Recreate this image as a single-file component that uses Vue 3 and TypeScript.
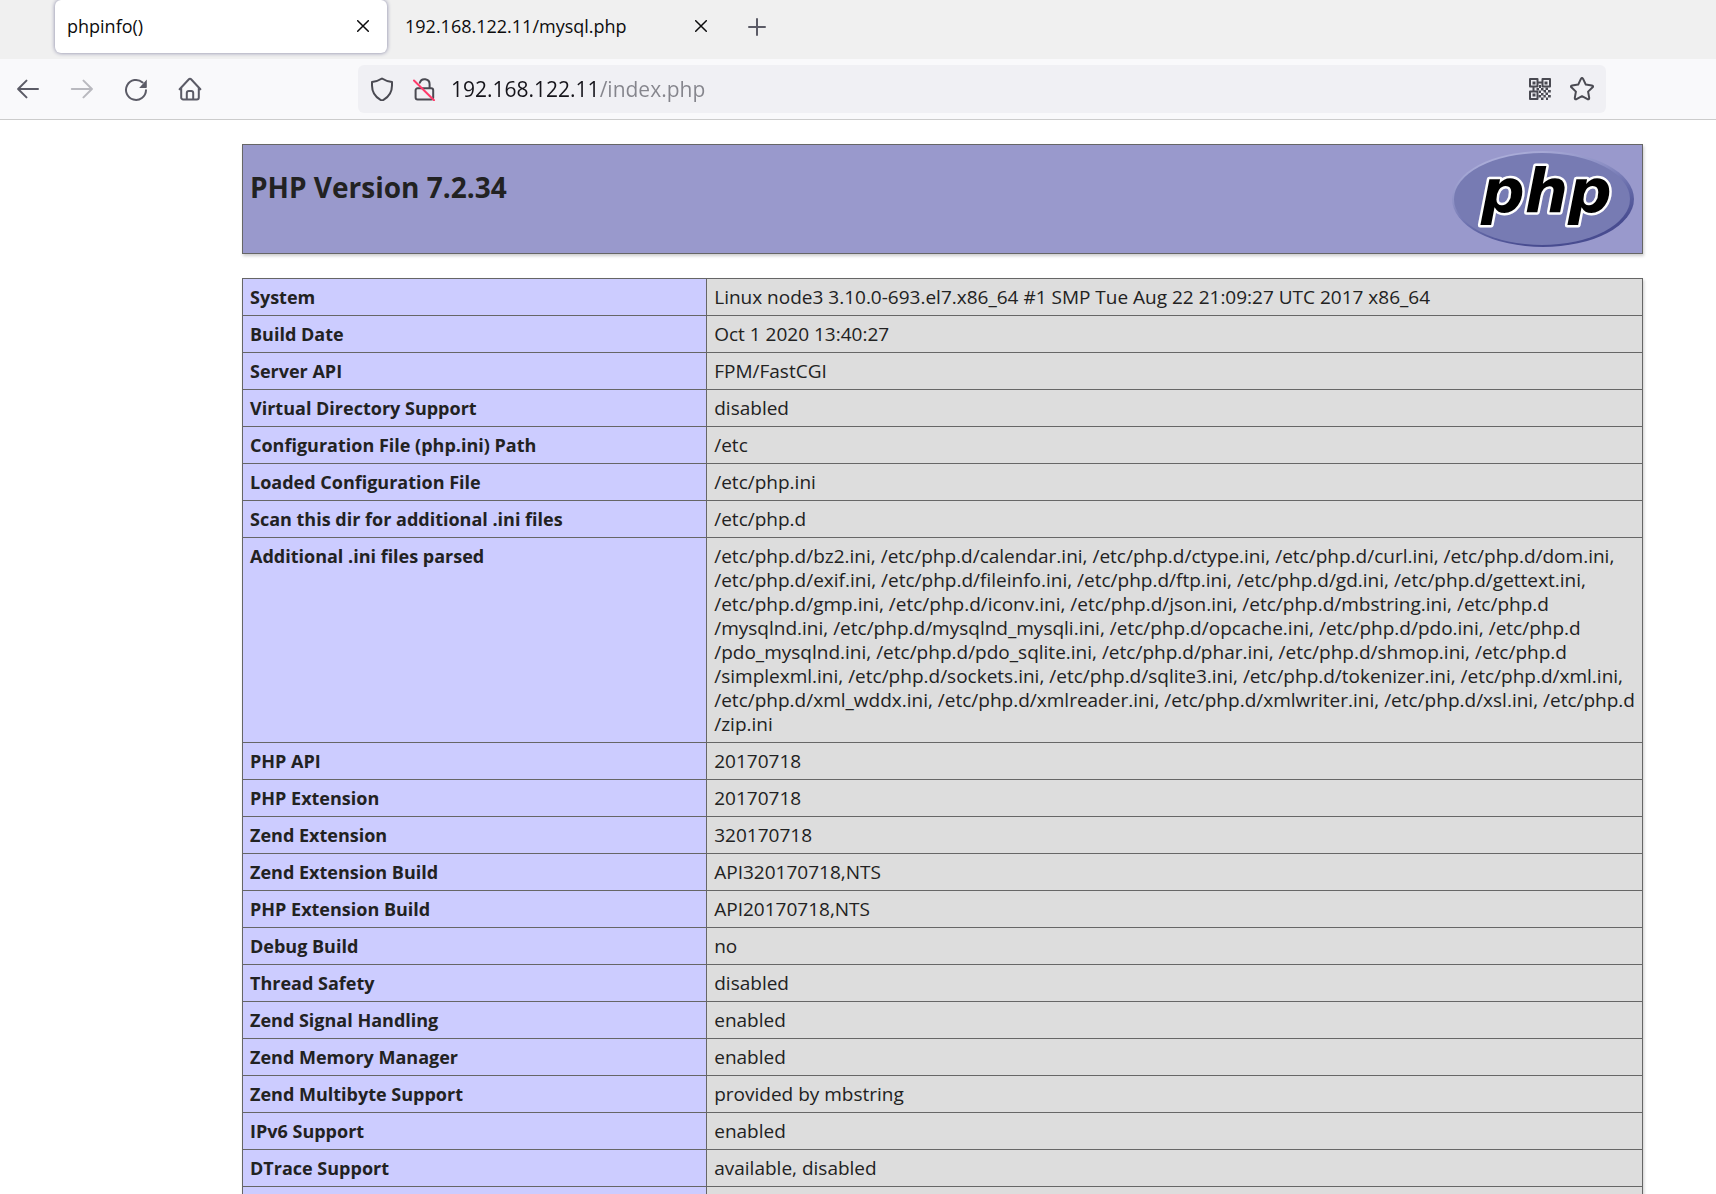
<script setup lang="ts">
import { ref } from 'vue'

interface Tab {
  title: string
}

interface InfoRow {
  label: string
  value: string
}

const tabs: Tab[] = [{ title: 'phpinfo()' }, { title: '192.168.122.11/mysql.php' }]
const activeTab = ref(0)
const address = ref('192.168.122.11/index.php')

const iniFiles = [
  '/etc/php.d/bz2.ini, /etc/php.d/calendar.ini, /etc/php.d/ctype.ini, /etc/php.d/curl.ini, /etc/php.d/dom.ini,',
  '/etc/php.d/exif.ini, /etc/php.d/fileinfo.ini, /etc/php.d/ftp.ini, /etc/php.d/gd.ini, /etc/php.d/gettext.ini,',
  '/etc/php.d/gmp.ini, /etc/php.d/iconv.ini, /etc/php.d/json.ini, /etc/php.d/mbstring.ini, /etc/php.d',
  '/mysqlnd.ini, /etc/php.d/mysqlnd_mysqli.ini, /etc/php.d/opcache.ini, /etc/php.d/pdo.ini, /etc/php.d',
  '/pdo_mysqlnd.ini, /etc/php.d/pdo_sqlite.ini, /etc/php.d/phar.ini, /etc/php.d/shmop.ini, /etc/php.d',
  '/simplexml.ini, /etc/php.d/sockets.ini, /etc/php.d/sqlite3.ini, /etc/php.d/tokenizer.ini, /etc/php.d/xml.ini,',
  '/etc/php.d/xml_wddx.ini, /etc/php.d/xmlreader.ini, /etc/php.d/xmlwriter.ini, /etc/php.d/xsl.ini, /etc/php.d',
  '/zip.ini',
].join('\n')

const rows: InfoRow[] = [
  { label: 'System', value: 'Linux node3 3.10.0-693.el7.x86_64 #1 SMP Tue Aug 22 21:09:27 UTC 2017 x86_64' },
  { label: 'Build Date', value: 'Oct 1 2020 13:40:27' },
  { label: 'Server API', value: 'FPM/FastCGI' },
  { label: 'Virtual Directory Support', value: 'disabled' },
  { label: 'Configuration File (php.ini) Path', value: '/etc' },
  { label: 'Loaded Configuration File', value: '/etc/php.ini' },
  { label: 'Scan this dir for additional .ini files', value: '/etc/php.d' },
  { label: 'Additional .ini files parsed', value: iniFiles },
  { label: 'PHP API', value: '20170718' },
  { label: 'PHP Extension', value: '20170718' },
  { label: 'Zend Extension', value: '320170718' },
  { label: 'Zend Extension Build', value: 'API320170718,NTS' },
  { label: 'PHP Extension Build', value: 'API20170718,NTS' },
  { label: 'Debug Build', value: 'no' },
  { label: 'Thread Safety', value: 'disabled' },
  { label: 'Zend Signal Handling', value: 'enabled' },
  { label: 'Zend Memory Manager', value: 'enabled' },
  { label: 'Zend Multibyte Support', value: 'provided by mbstring' },
  { label: 'IPv6 Support', value: 'enabled' },
  { label: 'DTrace Support', value: 'available, disabled' },
  { label: '', value: '' },
]
</script>

<template>
  <div class="browser">
    <header class="tab-strip">
      <div v-for="(tab, i) in tabs" :key="tab.title" class="tab" :class="{ active: i === activeTab }">
        <button class="tab-title" type="button" @click="activeTab = i">{{ tab.title }}</button>
        <button class="tab-close" type="button" aria-label="Close tab">
          <svg width="12" height="12" viewBox="0 0 12 12"><path d="M.7.7l10.6 10.6M11.3.7L.7 11.3" /></svg>
        </button>
      </div>
      <button class="new-tab" type="button" aria-label="New tab">
        <svg width="18" height="18" viewBox="0 0 18 18"><path d="M9 1v16M1 9h16" /></svg>
      </button>
    </header>

    <nav class="toolbar">
      <div class="nav-buttons">
        <button class="tool" type="button" aria-label="Back">
          <svg width="24" height="24" viewBox="0 0 24 24"><path d="M22 12H2.500M10.500 3.600L2.100 12l8.400 8.400" /></svg>
        </button>
        <button class="tool" type="button" aria-label="Forward" disabled>
          <svg width="24" height="24" viewBox="0 0 24 24"><path d="M1.800 12h19.700M13.500 3.600l8.400 8.400-8.400 8.400" /></svg>
        </button>
        <button class="tool" type="button" aria-label="Reload">
          <svg width="24" height="24" viewBox="0 0 24 24">
            <path d="M22 13.300A10 10 0 1 1 18.600 5.400" />
            <path class="solid" d="M22.800 2.600v7.600a.8.800 0 0 1-.8.800h-6.800z" />
          </svg>
        </button>
        <button class="tool" type="button" aria-label="Home">
          <svg width="24" height="24" viewBox="0 0 24 24">
            <path d="M1.600 12.200L10.900 2.300a1.500 1.500 0 0 1 2.200 0l9.300 9.900M3.200 10.800v9.700a2 2 0 0 0 2 2h13.600a2 2 0 0 0 2-2v-9.700M8.800 22.300v-6.200a2 2 0 0 1 2-2h2.400a2 2 0 0 1 2 2v6.200" />
          </svg>
        </button>
      </div>

      <div class="url-bar">
        <div class="icon-group">
          <svg width="24" height="24" viewBox="0 0 24 24">
            <path d="M12 1.500c3 2 6.500 3.100 10 3.500v3.500c0 6.500-3.500 11.500-8.500 14.400q-1.500.8-3 0C5.500 20 2 15 2 8.500V5c3.500-.4 7-1.500 10-3.500z" />
          </svg>
          <svg width="24" height="24" viewBox="0 0 24 24">
            <path d="M6.300 11.300h12.900a2 2 0 0 1 2 2v7.200a2 2 0 0 1-2 2H5.600a2 2 0 0 1-2-2v-7.200a2 2 0 0 1 2-2M17.600 11V7.200a5 5 0 0 0-9.800-1.400" />
            <path class="slash" d="M2 3.500l20 19.700" />
          </svg>
        </div>
        <input v-model="address" class="url" type="text" aria-label="Address" spellcheck="false" />
        <div class="icon-group">
          <button class="tool" type="button" aria-label="QR code">
            <svg width="24" height="24" viewBox="0 0 24 24">
              <path d="M2 2h7.500v7.500H2zM14.500 2H22v7.500h-7.500zM2 14.500h7.500V22H2zM9.500 5.500h5M5.500 9.500v5" />
              <path class="solid" d="M4.500 4.500h3v3h-3zM16.500 4.500h3v3h-3zM4.500 16.500h3v3h-3zM11 8h2v3h-2zM8.500 11H11v2.500H8.500zM13 11h2.500v2.500H13zM17.500 10.500H20V13h-2.500zM11 13.500h2V16h-2zM15.500 13h2.500v2.500h-2.500zM20 13h2.800v2.500H20zM13 16h2.500v2.500H13zM17.500 15.500H20V18h-2.500zM10.500 18H13v2.500h-2.500zM15.500 18h2.300v2.500h-2.300zM20 18h2.800v2.500H20zM13 20.500h2.500V23H13zM18 20.500h2V23h-2z" />
            </svg>
          </button>
          <button class="tool" type="button" aria-label="Bookmark this page">
            <svg width="24" height="24" viewBox="0 0 24 24">
              <path d="M10.900 1.900q1.100-1.900 2.200 0l2.700 5.700 6.100.8q1.800.5.700 1.900l-4.500 4.300 1.100 6.300q0 1.900-1.700 1.300L12 19.200l-5.500 3q-1.700.6-1.700-1.300l1.100-6.300-4.500-4.300q-1.100-1.400.7-1.900l6.100-.8z" />
            </svg>
          </button>
        </div>
      </div>
    </nav>

    <main class="page">
      <section class="banner">
        <h1>PHP Version 7.2.34</h1>
        <svg class="logo" width="182" height="96" viewBox="0 0 182 96" role="img" aria-label="PHP logo">
          <defs>
            <linearGradient id="rim" x1="0.25" y1="0" x2="0.75" y2="1">
              <stop offset="0" stop-color="#b0b2dc" />
              <stop offset="0.35" stop-color="#8c8fc4" />
              <stop offset="0.6" stop-color="#6469a8" />
              <stop offset="0.85" stop-color="#484c90" />
            </linearGradient>
          </defs>
          <ellipse cx="91" cy="48" rx="91" ry="48" fill="url(#rim)" />
          <ellipse cx="90" cy="48" rx="88" ry="46" fill="#777bb3" />
          <text x="29" y="61">php</text>
        </svg>
      </section>

      <table class="info">
        <tbody>
          <tr v-for="(row, i) in rows" :key="i">
            <th scope="row">{{ row.label }}</th>
            <td>{{ row.value }}</td>
          </tr>
        </tbody>
      </table>
    </main>
  </div>
</template>

<style>
body {
  margin: 0;
  background: #fff;
}
</style>

<style scoped>
.browser {
  display: flex;
  flex-direction: column;
  height: 100vh;
  overflow: hidden;
  font-family: "Open Sans", "Noto Sans", sans-serif;
  font-size: 18px;
  line-height: 24px;
  color: #222;
}

button {
  display: flex;
  align-items: center;
  justify-content: center;
  padding: 0;
  border: 0;
  background: none;
  color: inherit;
  font: inherit;
}

svg {
  display: block;
  flex: none;
}

svg path {
  fill: none;
  stroke: currentColor;
  stroke-width: 2;
  stroke-linecap: round;
  stroke-linejoin: round;
}

svg .solid {
  fill: currentColor;
  stroke: none;
}

svg .slash {
  stroke: #ff3b6b;
}

.tab-strip {
  display: flex;
  flex: none;
  padding: 0 55px 6px;
  background: #f0f0f0;
  color: #0c0c0d;
}

.tab {
  display: flex;
  align-items: center;
  box-sizing: border-box;
  width: 332px;
  height: 53px;
  padding: 0 12px 1px;
  border-radius: 6px;
}

.tab + .tab {
  margin-left: 6px;
}

.tab.active {
  background: #fff;
  box-shadow: 0 0 4px #8080a0;
}

.tab-title {
  flex: 1;
  justify-content: flex-start;
}

.tab-close {
  width: 24px;
  height: 24px;
}

.tab-close path {
  stroke-width: 1.500;
}

.new-tab {
  width: 48px;
  height: 53px;
  margin-left: 8px;
  color: #5b5b66;
}

.toolbar {
  display: flex;
  flex: none;
  align-items: center;
  padding: 6px 110px 6px 16px;
  border-bottom: 1px solid #ccc;
  background: #f9f9fb;
  color: #5b5b66;
}

.nav-buttons {
  display: flex;
  gap: 30px;
  width: 342px;
}

.tool {
  width: 24px;
  height: 24px;
}

.tool:disabled {
  opacity: 0.4;
}

.url-bar {
  display: flex;
  flex: 1;
  align-items: center;
  gap: 15px;
  height: 48px;
  padding: 0 12px;
  border-radius: 6px;
  background: #f0f0f4;
  color: #4a4a52;
}

.icon-group {
  display: flex;
  gap: 18px;
}

/* The host is dark, the path after it grey. */
.url {
  flex: 1;
  min-width: 0;
  height: 32px;
  padding: 0;
  border: 0;
  outline: 0;
  background: linear-gradient(90deg, #15141a 148px, #85858c 148px) text;
  color: #15141a;
  -webkit-text-fill-color: transparent;
  font: inherit;
  font-size: 21px;
}

.page {
  flex: 1;
  min-height: 0;
  padding: 24px 73px 24px 242px;
}

.banner {
  display: flex;
  align-items: flex-start;
  justify-content: space-between;
  padding: 6px 8px 6px 7px;
  border: 1px solid #666;
  background: #99c;
  box-shadow: 1px 2px 3px #ccc;
}

h1 {
  margin: 18px 0 0;
  font-size: 28px;
  line-height: 36px;
}

.logo {
  overflow: visible;
}

.logo text {
  fill: #000;
  stroke: #fff;
  stroke-width: 5px;
  stroke-linejoin: round;
  paint-order: stroke;
  font: italic bold 61px "DejaVu Sans", sans-serif;
}

.info {
  width: 100%;
  margin-top: 24px;
  border-collapse: collapse;
  box-shadow: 1px 2px 3px #ccc;
}

th,
td {
  padding: 6px 7px;
  border: 1px solid #666;
  text-align: left;
  vertical-align: top;
}

th {
  width: 466px;
  box-sizing: border-box;
  background: #ccf;
  font-weight: 700;
}

td {
  background: #ddd;
  font-size: 19px;
  white-space: pre;
}
</style>
